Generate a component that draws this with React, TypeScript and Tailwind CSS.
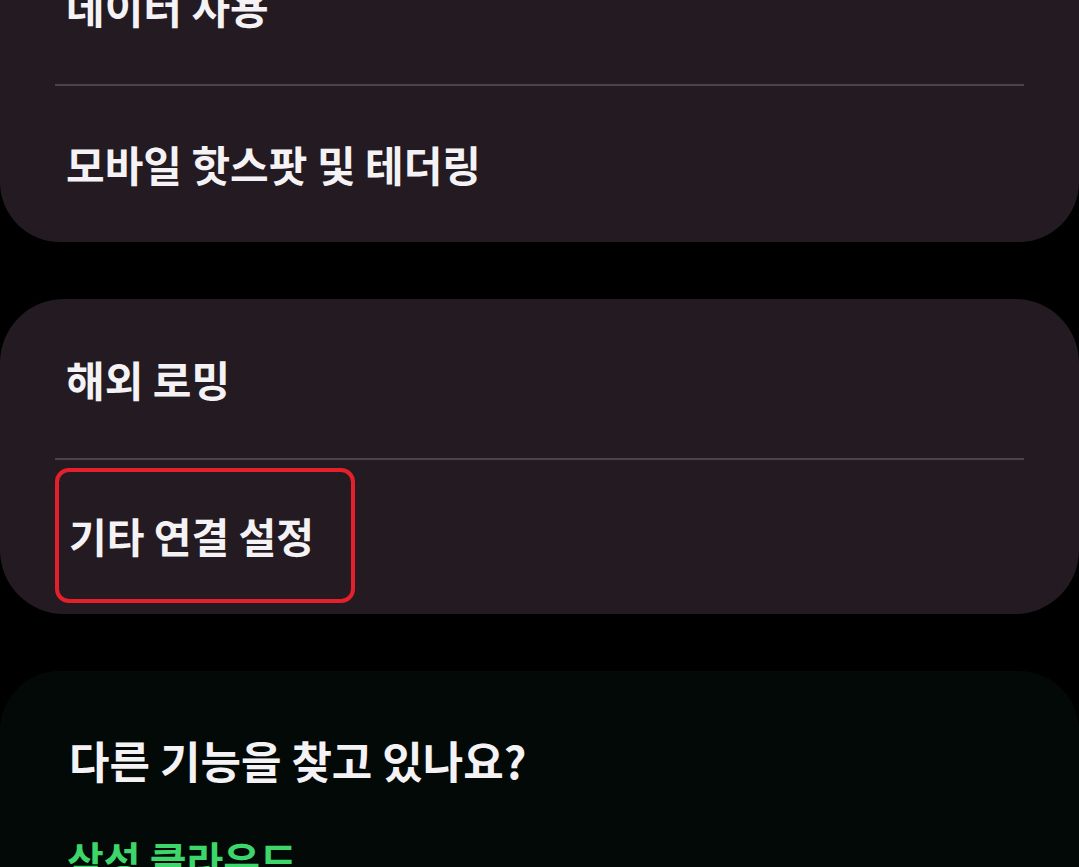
const font = "font-['Noto_Sans_CJK_KR','Noto_Sans',sans-serif]";

function Row({ label }: { label: string }) {
  return (
    <div className="h-[156px] flex items-center px-[66px]">
      <span className="text-[42px] font-semibold text-[#f4f2f4] leading-none">{label}</span>
    </div>
  );
}

function Divider() {
  return <div className="mx-[55px] h-[2px] bg-[#4a434a]" />;
}

export default function App() {
  return (
    <div className={`w-[1079px] h-[867px] overflow-hidden bg-black ${font}`}>
      {/* Connections card (top cut off) */}
      <div className="-mt-[72px] bg-[#231b21] rounded-b-[60px]">
        <Row label="데이터 사용" />
        <Divider />
        <Row label="모바일 핫스팟 및 테더링" />
      </div>

      <div className="mt-[57px] bg-[#231b21] rounded-[64px]">
        <div className="h-[159px] flex items-center px-[66px]">
          <span className="text-[42px] font-semibold text-[#f4f2f4] leading-none">해외 로밍</span>
        </div>
        <Divider />
        <div className="h-[154px] flex items-center pl-[55px]">
          <div className="w-[300px] h-[135px] -mt-[3px] flex items-center pl-[10px] border-4 border-[#e6202a] rounded-[14px]">
            <span className="text-[41px] font-semibold text-[#f4f2f4] leading-none">기타 연결 설정</span>
          </div>
        </div>
      </div>

      {/* Suggestions card */}
      <div className="mt-[57px] bg-[#030906] rounded-t-[60px] px-[69px] pt-[67px]">
        <p className="text-[44px] font-semibold text-[#f4f2f4] leading-none">다른 기능을 찾고 있나요?</p>
        <p className="mt-[57px] -ml-[2px] text-[40px] font-bold text-[#3dd66a] leading-none">삼성 클라우드</p>
      </div>
    </div>
  );
}
